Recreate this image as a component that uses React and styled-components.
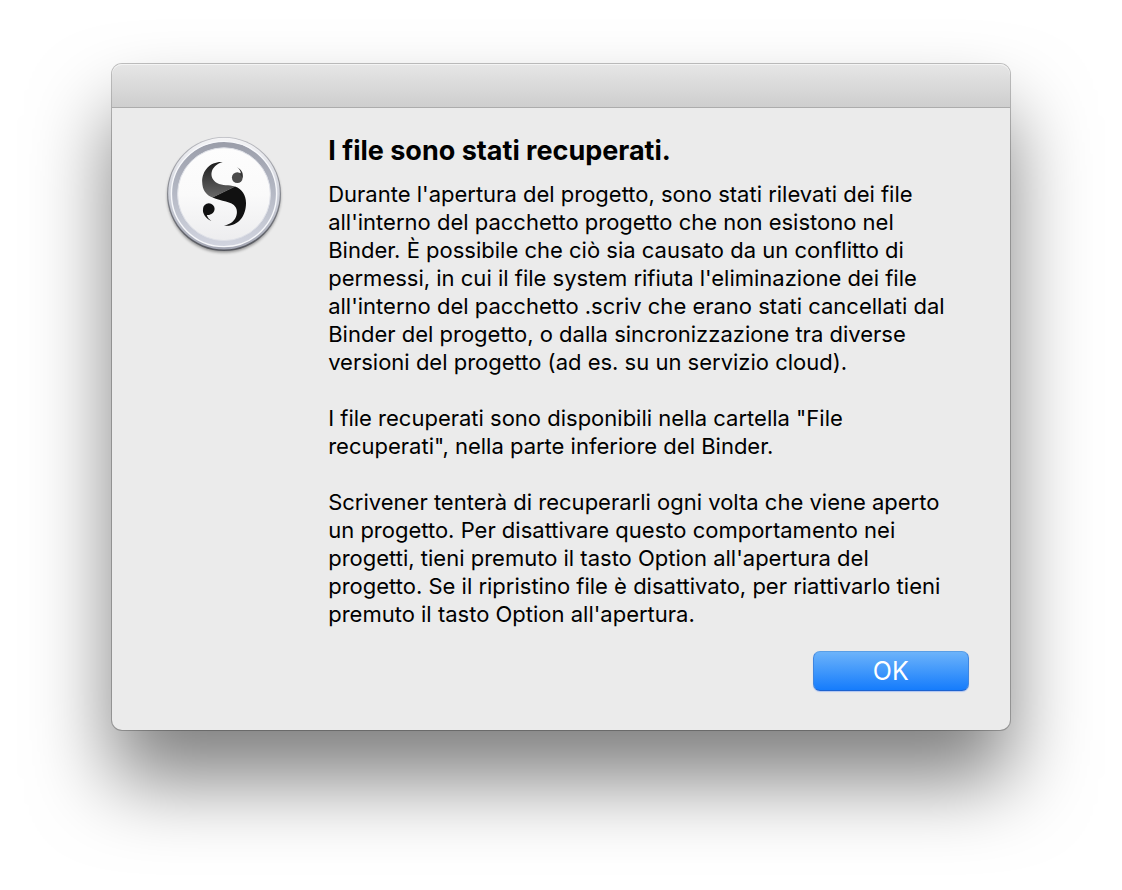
import React from "react";
import styled, { createGlobalStyle } from "styled-components";

const GlobalStyle = createGlobalStyle`
  body {
    margin: 0;
    background-color: #fff;
    font-family: Inter, "Liberation Sans", sans-serif;
    color: #000;
  }
`;

const Page = styled.main`
  padding: 64px 10% 160px;
`;

const Dialog = styled.section`
  border-radius: 10px;
  background-color: #ebebeb;
  box-shadow: 0 0 0 1px rgba(0, 0, 0, 0.24), 0 50px 80px rgba(0, 0, 0, 0.5);
`;

const TitleBar = styled.header`
  box-sizing: border-box;
  height: 44px;
  border-bottom: 1px solid #acacac;
  border-radius: 10px 10px 0 0;
  background: linear-gradient(#e6e6e6, #cecece);
  box-shadow: inset 0 1px 0 #f4f4f4;
`;

const Content = styled.div`
  display: flex;
  align-items: flex-start;
  gap: 40px;
  padding: 22px 52px 0 48px;
`;

const AppIcon = styled.svg`
  flex: none;
  width: 128px;
  height: 128px;
`;

const Message = styled.div`
  flex: 1;
  padding-top: 4px;
`;

const Title = styled.h1`
  margin: 0 0 12px;
  font-size: 27px;
  line-height: 34px;
  font-weight: 700;
`;

const Text = styled.p`
  margin: 0 0 28px;
  font-size: 22px;
  line-height: 28px;

  &:last-child {
    margin-bottom: 0;
  }
`;

const Footer = styled.footer`
  display: flex;
  justify-content: flex-end;
  padding: 23px 41px 39px;
`;

const Button = styled.button`
  width: 156px;
  height: 40px;
  padding: 0;
  border: 1px solid;
  border-color: #5a9fe6 #3f86e0 #1c62cf;
  border-radius: 7px;
  background: linear-gradient(#6cb3fa, #157cfc);
  box-shadow: 0 1px 1px rgba(40, 110, 255, 0.3);
  color: #fff;
  font-family: inherit;
  font-size: 25px;
  line-height: 36px;
  cursor: pointer;
`;

const ScrivenerIcon = () => (
  <AppIcon viewBox="0 0 128 128" role="img" aria-label="Scrivener">
    <defs>
      <linearGradient id="rim" x1="0" y1="0" x2="0" y2="1">
        <stop offset="0" stopColor="#f4f4f6" />
        <stop offset="0.5" stopColor="#d0d3dc" />
        <stop offset="1" stopColor="#a4a7b4" />
      </linearGradient>
      <linearGradient id="edge" x1="0" y1="0" x2="0" y2="1">
        <stop offset="0" stopColor="#b9bac0" />
        <stop offset="0.5" stopColor="#85878f" />
        <stop offset="1" stopColor="#55575e" />
      </linearGradient>
      <linearGradient id="ring" x1="0" y1="0" x2="0" y2="1">
        <stop offset="0" stopColor="#9a9da9" />
        <stop offset="0.4" stopColor="#b0b4c0" />
        <stop offset="1" stopColor="#d2d5e0" />
      </linearGradient>
      <linearGradient id="face" x1="0" y1="0" x2="0" y2="1">
        <stop offset="0" stopColor="#fdfdfd" />
        <stop offset="0.5" stopColor="#fafafa" />
        <stop offset="1" stopColor="#ededef" />
      </linearGradient>
      <linearGradient id="gloss" x1="0" y1="0" x2="0" y2="1">
        <stop offset="0" stopColor="#1c1c1c" />
        <stop offset="1" stopColor="#686868" />
      </linearGradient>
      <filter id="drop" x="-10%" y="-10%" width="120%" height="125%">
        <feGaussianBlur stdDeviation="1.4" />
      </filter>
    </defs>
    <circle cx="64" cy="66" r="56.5" fill="#000" opacity="0.4" filter="url(#drop)" />
    <circle cx="64" cy="64" r="57" fill="url(#edge)" />
    <circle cx="64" cy="63.6" r="55.8" fill="url(#rim)" />
    <circle cx="64" cy="64" r="52.6" fill="url(#ring)" stroke="#f7f8fb" strokeWidth="1.4" />
    <circle cx="64" cy="64.2" r="46.4" fill="url(#face)" stroke="#dfe1e8" strokeWidth="1" />
    <path
      d="M62.700 32C51 31 42 40 42.200 52C42.300 60 46 65 52.500 67.500L75 56.500C69 54.500 62.500 56 57 53C48.500 48 49.500 36 62.700 32Z"
      fill="url(#gloss)"
    />
    <path
      d="M52.500 67.500L75 56.500C82 59 86 65 86 73C86 87 77 97.500 64 95.600C75 94 79.500 83.500 75.500 77C72 71 61 71.500 52.500 67.500Z"
      fill="#111"
    />
    <circle cx="77.300" cy="47.600" r="5.400" fill="#4a4a4a" />
    <path
      d="M77 37.300C81.800 39.500 83.500 43.500 82.700 47.700L79.500 43.500L80.800 43.200C80.600 41 79.300 39 77 37.300Z"
      fill="#333"
    />
    <circle cx="48.800" cy="79" r="5.800" fill="#111" />
    <path
      d="M51.500 91C45.500 88.500 42.400 83.500 43 79L50 84.700C48.500 85.300 47.500 85 46.800 85C47.500 87.500 49.300 89.500 51.500 91Z"
      fill="#111"
    />
  </AppIcon>
);

const App = () => {
  return (
    <>
      <GlobalStyle />
      <Page>
        <Dialog role="alertdialog" aria-labelledby="title" aria-describedby="message">
          <TitleBar />
          <Content>
            <ScrivenerIcon />
            <Message>
              <Title id="title">I file sono stati recuperati.</Title>
              <div id="message">
                <Text>
                  Durante l'apertura del progetto, sono stati rilevati dei file
                  all'interno del pacchetto progetto che non esistono nel
                  Binder. È possibile che ciò sia causato da un conflitto di
                  permessi, in cui il file system rifiuta l'eliminazione dei
                  file all'interno del pacchetto .scriv che erano stati
                  cancellati dal Binder del progetto, o dalla sincronizzazione
                  tra diverse versioni del progetto (ad es. su un servizio
                  cloud).
                </Text>
                <Text>
                  I file recuperati sono disponibili nella cartella "File
                  recuperati", nella parte inferiore del Binder.
                </Text>
                <Text>
                  Scrivener tenterà di recuperarli ogni volta che viene aperto
                  un progetto. Per disattivare questo comportamento nei
                  progetti, tieni premuto il tasto Option all'apertura del
                  progetto. Se il ripristino file è disattivato, per riattivarlo
                  tieni premuto il tasto Option all'apertura.
                </Text>
              </div>
            </Message>
          </Content>
          <Footer>
            <Button type="button">OK</Button>
          </Footer>
        </Dialog>
      </Page>
    </>
  );
};

export default App;
